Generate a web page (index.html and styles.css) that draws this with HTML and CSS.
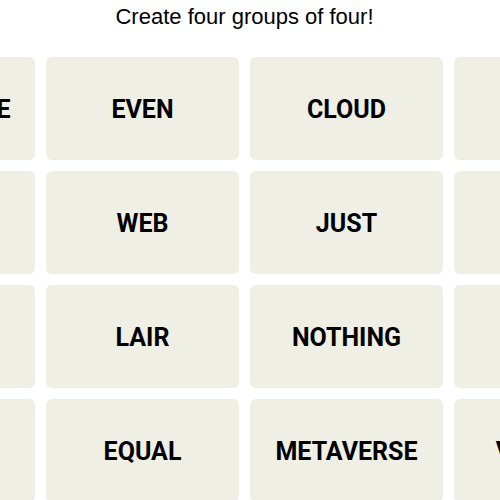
FILE: index.html
```html
<!DOCTYPE html>
<html lang="en">
<head>
    <meta charset="UTF-8">
    <meta name="viewport" content="width=device-width, initial-scale=1.0">
    <title>Connections</title>
    <link rel="stylesheet" href="styles.css">
</head>
<body>
    <div class="board">
        <p class="prompt">Create four groups of four!</p>
        <div class="grid">
            <div class="tile">ADVANTAGE</div>
            <div class="tile">EVEN</div>
            <div class="tile">CLOUD</div>
            <div class="tile">NET</div>

            <div class="tile">BEAT</div>
            <div class="tile">WEB</div>
            <div class="tile">JUST</div>
            <div class="tile">TIE</div>

            <div class="tile">FAIR</div>
            <div class="tile">LAIR</div>
            <div class="tile">NOTHING</div>
            <div class="tile">SAME</div>

            <div class="tile">PAR</div>
            <div class="tile">EQUAL</div>
            <div class="tile">METAVERSE</div>
            <div class="tile">VENTURE</div>
        </div>
    </div>
</body>
</html>
```

FILE: styles.css
```css
* {
    margin: 0;
    padding: 0;
    box-sizing: border-box;
}

html, body {
    overflow: hidden;
    background: #fff;
}

body {
    font-family: 'Liberation Sans', Arial, sans-serif;
    color: #000;
}

.board {
    width: 489px;
}

.prompt {
    margin-top: 4px;
    font-size: 22px;
    line-height: 25px;
    text-align: center;
}

.grid {
    display: grid;
    grid-template-columns: repeat(4, 193px);
    grid-auto-rows: 103px;
    gap: 11px;
    width: 805px;
    margin-top: 28px;
    margin-left: -158px;
}

.tile {
    display: flex;
    justify-content: center;
    align-items: center;
    padding-top: 2px;
    background: #efefe6;
    border-radius: 6px;
    font-family: Roboto, 'Liberation Sans', sans-serif;
    font-size: 25px;
    font-weight: 700;
    text-transform: uppercase;
    white-space: nowrap;
}
```
